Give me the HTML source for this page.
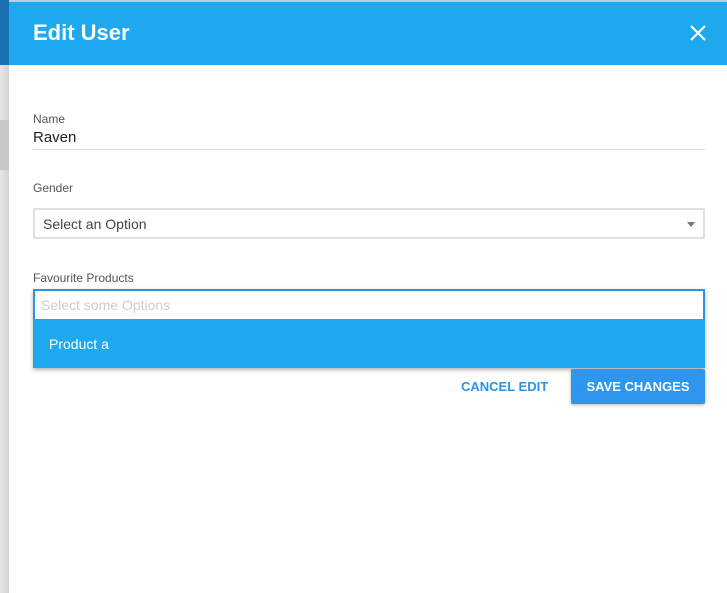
<!DOCTYPE html>
<html><head><style>
body{margin:0;width:727px;height:593px;overflow:hidden;background:#fff;font-family:"Liberation Sans",Arial,sans-serif;position:relative}
.strip{position:absolute;left:0;top:0;width:9px;height:593px;background:linear-gradient(90deg,#e4e4e4,#d4d4d4)}
.strip .b{position:absolute;top:0;height:65px;width:9px;background:#1a73b0}
.strip .g{position:absolute;top:120px;height:50px;width:9px;background:#c8c8c8}
.dlg{position:absolute;left:9px;top:0;right:0;bottom:0;background:#fff}
.hdr{height:65px;background:#1ea9ef;border-top:2px solid #bcd;box-sizing:border-box;position:relative}
.hdr h1{margin:0;position:absolute;left:24px;top:18px;color:#fff;font-size:22px;font-weight:bold}
.x{position:absolute;right:20px;top:22px;width:18px;height:18px}
.lbl{position:absolute;left:24px;font-size:12px;color:#555}
</style></head><body>
<div class="strip"><div class="b"></div><div class="g"></div></div>
<div class="dlg">
<div class="hdr"><h1>Edit User</h1>
<svg class="x" viewBox="0 0 18 18"><path d="M2 2L16 16M16 2L2 16" stroke="#fff" stroke-width="2.2"/></svg></div>
<div class="lbl" style="top:112px">Name</div>
<div style="position:absolute;left:24px;top:129px;font-size:15px;color:#222">Raven</div>
<div style="position:absolute;left:24px;right:22px;top:149px;border-top:1px solid #ddd"></div>
<div class="lbl" style="top:181px">Gender</div>
<div style="position:absolute;left:24px;right:22px;top:208px;height:31px;border:2px solid #e0e0e0;box-sizing:border-box;border-radius:2px">
<span style="position:absolute;left:8px;top:6px;font-size:14px;color:#444">Select an Option</span>
<span style="position:absolute;right:8px;top:12px;border:4px solid transparent;border-top:5px solid #777;border-bottom:0"></span></div>
<div class="lbl" style="top:271px">Favourite Products</div>
<div style="position:absolute;left:24px;right:22px;top:289px;height:79px;box-shadow:0 2px 4px rgba(0,0,0,.3)">
<div style="height:30px;border:2px solid #2a94e6;border-bottom:0;box-sizing:border-box;background:#fff;position:relative">
<span style="position:absolute;left:6px;top:6px;font-size:14px;color:#ccc">Select some Options</span></div>
<div style="height:49px;background:#1ea9ef;color:#fff;font-size:14px;line-height:50px;padding-left:16px">Product a</div></div>
<div style="position:absolute;left:452px;top:379px;font-size:13px;font-weight:bold;color:#2a94e6">CANCEL EDIT</div>
<div style="position:absolute;left:562px;top:369px;width:134px;height:35px;background:#2e96ec;border-radius:2px;box-shadow:0 1px 3px rgba(0,0,0,.3);color:#fff;font-size:13px;font-weight:bold;text-align:center;line-height:35px">SAVE CHANGES</div>
</div>
</body></html>
